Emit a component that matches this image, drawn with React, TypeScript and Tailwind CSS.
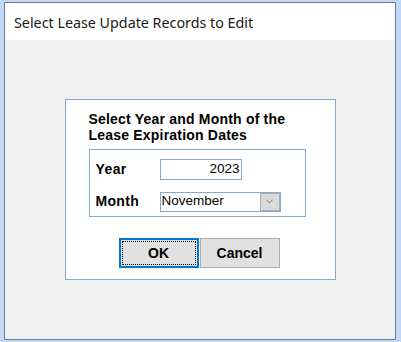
import { ChevronDown } from "lucide-react";

const dlg = { fontFamily: '"Liberation Sans", Arial, sans-serif' };

export default function App() {
  return (
    <div className="w-[401px] h-[342px] bg-[#c1d9f6] pt-[2px] pl-[4px]">
      <div className="w-[392px] h-[338px] border border-[#6e7c8f] flex flex-col">
        <div
          className="h-[37px] bg-white flex items-center pl-[9px] pt-[2px] text-[14.3px] text-[#1a1a1a]"
          style={{ fontFamily: '"Noto Sans", "Open Sans", sans-serif' }}
        >
          Select Lease Update Records to Edit
        </div>
        <div className="flex-1 bg-[#f0f0f0] flex justify-center pt-[59px]" style={dlg}>
          <div className="w-[271px] h-[181px] bg-white border border-[#87a9cf] flex flex-col pl-[23px] pt-[11px] text-black">
            <div className="text-[14px] font-bold leading-[16px] tracking-[0.2px]">
              Select Year and Month of the
              <br />
              Lease Expiration Dates
            </div>
            <div className="mt-[6px] w-[217px] h-[68px] border border-[#87a9cf] flex flex-col pl-[6px] pt-[9px] gap-[11px]">
              <div className="flex items-center">
                <span className="w-[64px] text-[14px] font-bold tracking-[0.4px]">Year</span>
                <div className="w-[82px] h-[21px] border border-[#87a9cf] flex items-center justify-end pr-[1px] text-[13.5px]">
                  2023
                </div>
              </div>
              <div className="flex items-center">
                <span className="w-[64px] text-[14px] font-bold tracking-[0.3px]">Month</span>
                <div className="w-[121px] h-[20px] border border-[#87a9cf] flex items-center text-[13.5px]">
                  <span className="flex-1 pl-[1px]">November</span>
                  <div className="w-[20px] h-[18px] bg-[#dadada] border border-[#adadad] flex items-center justify-center">
                    <ChevronDown size={11} strokeWidth={1.4} color="#444" />
                  </div>
                </div>
              </div>
            </div>
            <div className="flex gap-[1px] mt-[21px] pl-[30px]">
              <div className="w-[80px] h-[30px] border-2 border-[#0078d7] bg-[#e1e1e1] p-[1px]">
                <div className="w-full h-full border border-dotted border-black flex items-center justify-center text-[14px] font-bold">
                  OK
                </div>
              </div>
              <div className="w-[80px] h-[30px] border border-[#adadad] bg-[#e1e1e1] flex items-center justify-center text-[14px] font-bold">
                Cancel
              </div>
            </div>
          </div>
        </div>
      </div>
    </div>
  );
}
